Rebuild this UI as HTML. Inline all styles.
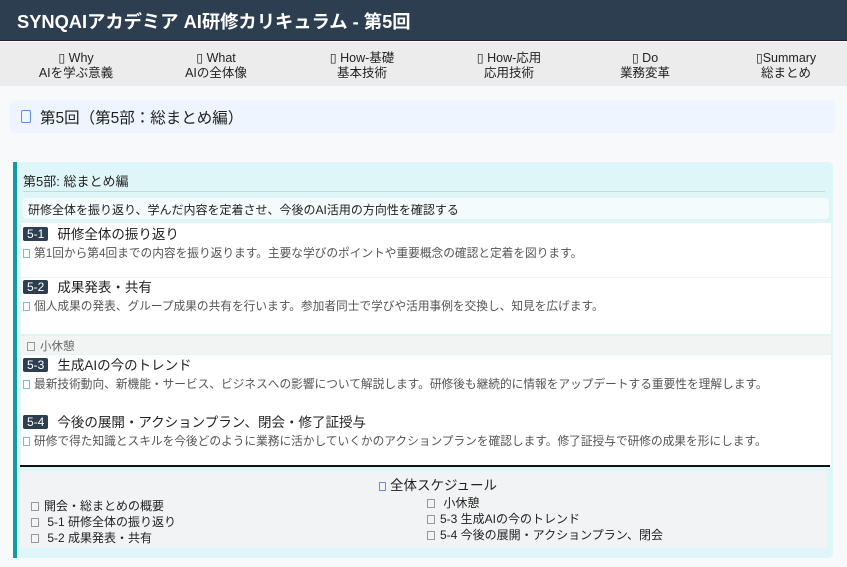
<!DOCTYPE html>
<html><head><meta charset="utf-8"><style>
*{margin:0;padding:0;box-sizing:border-box}
body{width:847px;height:567px;overflow:hidden;background:#f8f9fa;font-family:"Liberation Sans","Noto Sans CJK JP",sans-serif;color:#222;position:relative}
.hdr{position:absolute;left:0;top:0;width:847px;height:41px;background:#2c3e50;color:#fff;font-size:18.3px;font-weight:bold;padding:8px 0 0 17px;border-bottom:1px solid #223}
.nav{position:absolute;left:0;top:42px;width:847px;height:44px;background:#ececec}
.nav div{position:absolute;top:9px;font-size:12.5px;line-height:15px;text-align:center;color:#222;transform:translateX(-50%);white-space:nowrap}
.ttl{position:absolute;left:10px;top:100px;width:825px;height:33px;background:#eef5fe;border-radius:5px;font-size:15.5px;padding:6px 0 0 30px}
.ttl i{position:absolute;left:11px;top:10px;width:10px;height:13px;border:1.5px solid #5b8ef0;border-radius:2px}
.card{position:absolute;left:13px;top:162px;width:820px;height:396px;background:#dff6f9;border-left:4px solid #119aa8;border-radius:0 5px 5px 0}
.h2{position:absolute;left:6px;top:9px;font-size:13px}
.hl{position:absolute;left:6px;top:29px;width:802px;height:1px;background:#c5d8dc}
.desc{position:absolute;left:6px;top:36px;width:806px;height:21px;background:#f3fbfd;border-radius:4px;font-size:12px;padding:3px 0 0 5px}
.wb{position:absolute;left:4px;width:810px;background:#fff}
.it{position:absolute;left:6px;font-size:13.5px;white-space:nowrap}
.bd{display:inline-block;background:#2c3e50;color:#fff;font-size:12px;padding:0 4px;border-radius:2px;margin-right:9px;vertical-align:1px}
.ds{position:absolute;left:6px;font-size:11.7px;color:#555;white-space:nowrap}
.sq{display:inline-block;width:7px;height:9px;border:1px solid #6cc3d3;margin-right:4px;vertical-align:-1px}
.gq{display:inline-block;width:8px;height:9px;border:1px solid #999;margin-right:5px;vertical-align:-1px}
.brk{position:absolute;left:4px;top:174px;width:810px;height:18px;background:#f2f3f3;font-size:11.5px;color:#666;padding:2px 0 0 6px}
.line{position:absolute;left:3px;top:303px;width:810px;height:2px;background:#111}
.sch{position:absolute;left:4px;top:309px;width:806px;height:77px;background:#f1f3f5;border-radius:4px;font-size:12px}
.sch div{position:absolute;white-space:nowrap}
</style></head><body>
<div class="hdr">SYNQAIアカデミア AI研修カリキュラム - 第5回</div>
<div class="nav">
<div style="left:76px">▯ Why<br>AIを学ぶ意義</div>
<div style="left:216px">▯ What<br>AIの全体像</div>
<div style="left:362px">▯ How-基礎<br>基本技術</div>
<div style="left:509px">▯ How-応用<br>応用技術</div>
<div style="left:645px">▯ Do<br>業務変革</div>
<div style="left:786px">▯Summary<br>総まとめ</div>
</div>
<div class="ttl"><i></i>第5回（第5部：総まとめ編）</div>
<div class="card">
<div class="h2">第5部: 総まとめ編</div>
<div class="hl"></div>
<div class="desc">研修全体を振り返り、学んだ内容を定着させ、今後のAI活用の方向性を確認する</div>
<div class="wb" style="top:61px;height:111px"></div>
<div style="position:absolute;left:4px;top:115px;width:810px;height:1px;background:#eef3f4"></div>
<div class="it" style="top:61px"><span class="bd">5-1</span>研修全体の振り返り</div>
<div class="ds" style="top:82px"><span class="sq"></span>第1回から第4回までの内容を振り返ります。主要な学びのポイントや重要概念の確認と定着を図ります。</div>
<div class="it" style="top:114px"><span class="bd">5-2</span>成果発表・共有</div>
<div class="ds" style="top:135px"><span class="sq"></span>個人成果の発表、グループ成果の共有を行います。参加者同士で学びや活用事例を交換し、知見を広げます。</div>
<div class="brk"><span class="gq"></span>小休憩</div>
<div class="wb" style="top:193px;height:110px"></div>
<div class="it" style="top:192px"><span class="bd">5-3</span>生成AIの今のトレンド</div>
<div class="ds" style="top:213px"><span class="sq"></span>最新技術動向、新機能・サービス、ビジネスへの影響について解説します。研修後も継続的に情報をアップデートする重要性を理解します。</div>
<div class="it" style="top:249px"><span class="bd">5-4</span>今後の展開・アクションプラン、閉会・修了証授与</div>
<div class="ds" style="top:270px"><span class="sq"></span>研修で得た知識とスキルを今後どのように業務に活かしていくかのアクションプランを確認します。修了証授与で研修の成果を形にします。</div>
<div class="line"></div>
<div class="sch">
<div style="left:358px;top:3px;font-size:13.5px"><span class="sq" style="border-color:#5b8ef0"></span>全体スケジュール</div>
<div style="left:10px;top:26px"><span class="gq"></span>開会・総まとめの概要</div>
<div style="left:10px;top:42px"><span class="gq"></span> 5-1 研修全体の振り返り</div>
<div style="left:10px;top:58px"><span class="gq"></span> 5-2 成果発表・共有</div>
<div style="left:406px;top:23px"><span class="gq"></span> 小休憩</div>
<div style="left:406px;top:39px"><span class="gq"></span>5-3 生成AIの今のトレンド</div>
<div style="left:406px;top:55px"><span class="gq"></span>5-4 今後の展開・アクションプラン、閉会</div>
</div>
</div>
</body></html>
